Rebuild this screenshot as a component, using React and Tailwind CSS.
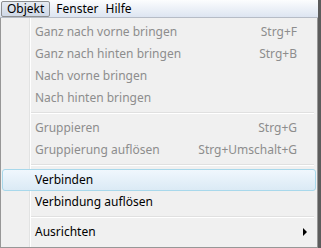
const font = { fontFamily: '"Segoe UI", "Noto Sans", "Open Sans", sans-serif' };

const groups = [
    [
        {label: "Ganz nach vorne bringen", shortcut: "Strg+F", disabled: true},
        {label: "Ganz nach hinten bringen", shortcut: "Strg+B", disabled: true},
        {label: "Nach vorne bringen", disabled: true},
        {label: "Nach hinten bringen", disabled: true},
    ],
    [
        {label: "Gruppieren", shortcut: "Strg+G", disabled: true},
        {label: "Gruppierung auflösen", shortcut: "Strg+Umschalt+G", disabled: true},
    ],
    [
        {label: "Verbinden", active: true},
        {label: "Verbindung auflösen"},
    ],
    [
        {label: "Ausrichten", submenu: true},
    ],
];

export default function App() {
    return (
        <div className="w-[321px] h-[248px] bg-[#f0f0f0] overflow-hidden relative text-[12px] leading-none" style={font}>
            <div className="h-[18px] flex items-center pl-[1px] bg-gradient-to-b from-[#fcfdfe] to-[#dde5f1] border-b border-[#b6bcc6] mr-[3px]">
                <div className="h-[16px] px-[5px] flex items-center rounded-[2px] border border-[#8d8f91] bg-gradient-to-b from-[#e6ebf2] to-[#cfd8e6] text-black">
                    Objekt
                </div>
                <div className="pl-[6px] pr-[6px] text-black">Fenster</div>
                <div className="pl-[1px] text-black">Hilfe</div>
            </div>
            <div className="flex">
                <div className="w-[318px] h-[230px] border-x border-b border-[#979797] bg-[#f0f0f0] relative pt-[3px]">
                    <div className="absolute left-[28px] top-0 bottom-0 w-[1px] bg-[#e2e3e3]" />
                    <div className="absolute left-[29px] top-0 bottom-0 w-[1px] bg-white" />
                    {groups.map((group, gi) => (
                        <div key={gi}>
                            {gi > 0 && (
                                <div className="h-[8px] flex flex-col justify-center pl-[29px] pr-[3px]">
                                    <div className="h-[1px] bg-[#e0e0e0]" />
                                    <div className="h-[1px] bg-white" />
                                </div>
                            )}
                            {group.map((item) => (
                                <MenuItem key={item.label} {...item} />
                            ))}
                        </div>
                    ))}
                </div>
                <div className="w-[3px] h-[230px] bg-[#5c5c5c]" />
            </div>
            <div className="absolute right-0 top-0 w-[3px] h-[18px] bg-[#5c5c5c]" />
        </div>
    )
}

function MenuItem({label, shortcut, disabled, active, submenu}) {
    const color = disabled ? "text-[#8d8d8d]" : "text-black";
    return (
        <div className="h-[22px] px-[1px] relative">
            <div
                className={`${active ? 'border-[#a8d8eb] bg-gradient-to-b from-[#f0f7fd] to-[#dbeaf5]' : 'border-transparent'} h-full flex items-center rounded-[3px] border pl-[32px] pr-[18px] relative z-10 ${color}`}
            >
                <span className="flex-grow">{label}</span>
                {shortcut && <span>{shortcut}</span>}
                {submenu && (
                    <svg width="5" height="8" viewBox="0 0 5 8" className="mr-[-11px]">
                        <path d="M0 0 L4 4 L0 8 Z" fill="#000"/>
                    </svg>
                )}
            </div>
        </div>
    )
}
